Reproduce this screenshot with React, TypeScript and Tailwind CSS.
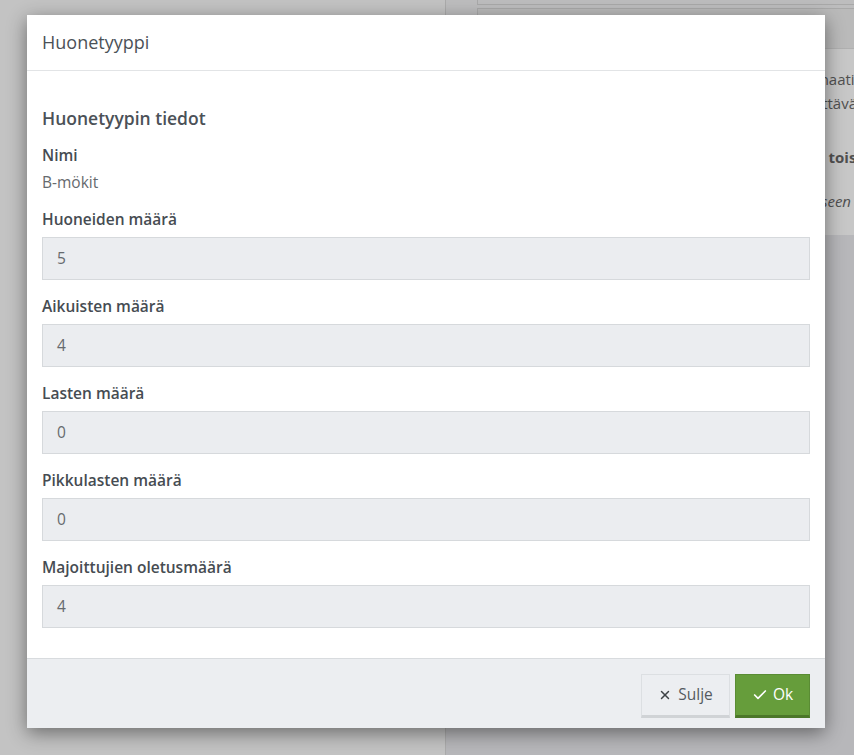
import React from 'react';
import { Check, X } from 'lucide-react';

const fields = [
  { label: 'Huoneiden määrä', value: '5' },
  { label: 'Aikuisten määrä', value: '4' },
  { label: 'Lasten määrä', value: '0' },
  { label: 'Pikkulasten määrä', value: '0' },
  { label: 'Majoittujien oletusmäärä', value: '4' },
];

const BackgroundPage: React.FC = () => (
  <div className="flex h-full w-full">
    <div className="w-[446px] shrink-0 border-r border-[#ababab] bg-[#c3c3c3]" />
    <div className="flex flex-1 flex-col bg-[#bdbdbe]">
      <div className="ml-[31px] h-[5px] border-b border-l border-[#a9a9a9]" />
      <div className="ml-[31px] mt-[3px] h-[40px] border-l border-t border-[#a9a9a9] bg-[#bababa]" />
      <div className="flex h-[187px] flex-col items-end border-t border-[#b0b0b0] bg-[#c7c7c7] pt-[18px] text-[15px] text-[#505050]">
        <div className="mr-[-6px] whitespace-nowrap leading-[24px]">Koordinaatit</div>
        <div className="mr-[-3px] whitespace-nowrap leading-[24px]">Lisättävä</div>
        <div className="mr-[-30px] mt-[30px] whitespace-nowrap font-bold leading-[24px]">Siirrä toiseen</div>
        <div className="mr-[3px] mt-[20px] whitespace-nowrap italic leading-[24px]">huoneeseen</div>
      </div>
      <div className="flex-1 bg-[#b7b7ba]" />
    </div>
  </div>
);

export default function App() {
  return (
    <div
      className="relative h-[755px] w-full overflow-hidden"
      style={{ fontFamily: '"Open Sans", "Noto Sans", sans-serif' }}
    >
      <BackgroundPage />
      <div className="absolute left-[27px] top-[15px] flex h-[713px] w-[798px] flex-col bg-white shadow-[0_5px_18px_rgba(0,0,0,0.45)]">
        <div className="flex h-[56px] items-center border-b border-[#e2e4e6] px-[15px] text-[18px] text-[#4b5157]">
          Huonetyyppi
        </div>
        <div className="flex-1 px-[15px] pt-[35px]">
          <h2 className="text-[17.5px] font-semibold leading-[24px] text-[#4b5157]">Huonetyypin tiedot</h2>
          <div className="mt-[15px] text-[15.5px] font-semibold leading-[20px] text-[#464c52]">Nimi</div>
          <div className="mt-[7px] text-[15.5px] leading-[20px] text-[#666a6e]">B-mökit</div>
          {fields.map((f, i) => (
            <div key={f.label} className={i === 0 ? 'mt-[17px]' : 'mt-[16px]'}>
              <div className="text-[15.5px] font-semibold leading-[20px] text-[#464c52]">{f.label}</div>
              <div className="mt-[8px] flex h-[43px] items-center border border-[#d6d9dc] bg-[#ebedf0] px-[14px] text-[15.5px] text-[#666a6e]">
                {f.value}
              </div>
            </div>
          ))}
        </div>
        <div className="flex h-[70px] items-start justify-end gap-[5px] border-t border-[#d8dbde] bg-[#eceef1] px-[15px] pt-[15px]">
          <button className="flex h-[44px] w-[89px] items-center justify-center gap-[6px] border border-[#dcdfe2] border-b-[3px] border-b-[#d0d3d6] bg-[#eceef1] text-[15.5px] text-[#555a5f]">
            <X size={14} strokeWidth={2.5} className="text-[#3e4246]" />
            Sulje
          </button>
          <button className="flex h-[44px] w-[75px] items-center justify-center gap-[5px] border border-[#5a8c34] border-b-[3px] border-b-[#4b7729] bg-[#669d3b] text-[15.5px] text-white">
            <Check size={16} strokeWidth={2.5} />
            Ok
          </button>
        </div>
      </div>
    </div>
  );
}
